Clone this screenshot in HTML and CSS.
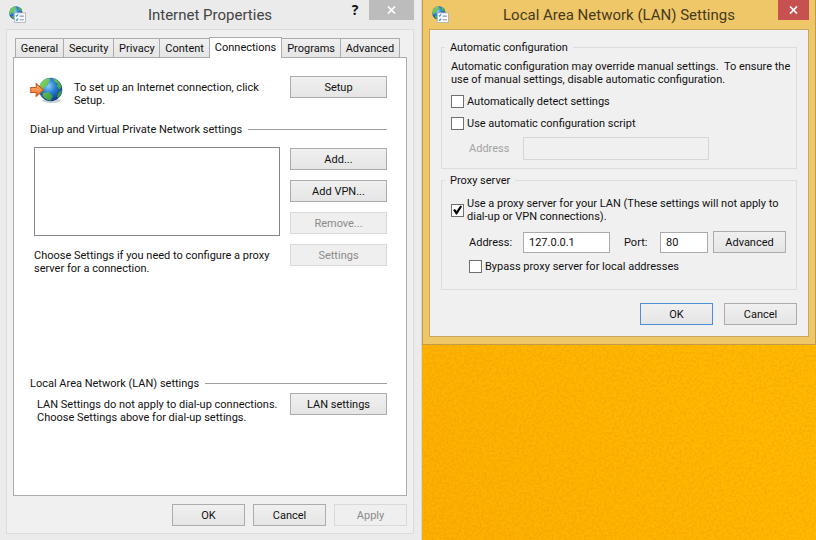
FILE: index.html
```html
<!DOCTYPE html>
<html lang="en">
<head>
<meta charset="utf-8">
<title>Internet Properties</title>
<link rel="stylesheet" href="styles.css">
</head>
<body>
<svg class="defs" width="0" height="0" aria-hidden="true">
  <defs>
    <radialGradient id="sea" cx="0.4" cy="0.35" r="0.7">
      <stop offset="0" stop-color="#8fd0f5"/>
      <stop offset="0.4" stop-color="#2f86d8"/>
      <stop offset="1" stop-color="#0b2f86"/>
    </radialGradient>
    <linearGradient id="land" x1="0" y1="0" x2="1" y2="1">
      <stop offset="0" stop-color="#8fdc62"/>
      <stop offset="1" stop-color="#1d8a35"/>
    </linearGradient>
    <linearGradient id="arrow" x1="0" y1="0" x2="0" y2="1">
      <stop offset="0" stop-color="#ffb877"/>
      <stop offset="1" stop-color="#f0702a"/>
    </linearGradient>
    <symbol id="app-icon" viewBox="0 0 16 16">
      <circle cx="6.5" cy="6.5" r="6.3" fill="url(#sea)"/>
      <path d="M1 4Q3 .6 5.5.5L7 2 5 4 4.5 6 2.5 6.5 1 8.5Q-.3 6 1 4ZM9 .8Q12 2 12.6 5L10.5 5 9 3.2ZM2.5 9.500L5 9 6 11 5 12.600Q3 11.500 2.500 9.500Z" fill="url(#land)"/>
      <rect x="5" y="6.500" width="10.500" height="9" fill="#f8fafb" stroke="#a9b4bc" stroke-width="0.800"/>
      <path d="M6.500 8.800l.8.800 1.300-1.800M6.500 12.800l.8.800 1.300-1.800" fill="none" stroke="#2a8fd0"/>
      <path d="M10 9.500h4M10 13h4" stroke="#8b979f"/>
    </symbol>
  </defs>
</svg>
<main class="desktop">
  <section class="window props">
    <header class="titlebar">
      <svg class="app-icon" aria-hidden="true"><use href="#app-icon"/></svg>
      <h1>Internet Properties</h1>
      <div class="controls">
        <button class="help" aria-label="Help">?</button>
        <button class="close" aria-label="Close"><svg width="9" height="8" viewBox="0 0 9 8"><path d="M1 .5l7 7M8 .5l-7 7" stroke="#fff" stroke-width="1.700"/></svg></button>
      </div>
    </header>
    <div class="client">
      <nav class="tabs" role="tablist">
        <button role="tab">General</button>
        <button role="tab">Security</button>
        <button role="tab">Privacy</button>
        <button role="tab">Content</button>
        <button role="tab" class="active" aria-selected="true">Connections</button>
        <button role="tab">Programs</button>
        <button role="tab">Advanced</button>
      </nav>
      <div class="panel">
        <div class="row setup">
          <div class="intro">
            <svg class="globe" viewBox="0 0 32 26" aria-hidden="true">
              <ellipse cx="21" cy="23.500" rx="9" ry="2" fill="#c9ced3"/>
              <circle cx="20" cy="12.500" r="11.300" fill="url(#sea)"/>
              <path d="M10 7Q13 2 18 1.500L20 3 17 6 18 8 14 10 12 14 9.500 14Q8.500 10 10 7ZM22 1.600Q28 3 30.500 9L29 13 26 9 27 7 24 5ZM13 16L18 15 22 19 20 23.500Q15 22.500 12 18.500ZM28 15L31 13Q30.500 18 27 21L26 19Z" fill="url(#land)"/>
              <path d="M.7 10.500H6V6.800L13 13 6 19.200V15.500H.7Z" fill="url(#arrow)" stroke="#c9541c"/>
            </svg>
            <p>To set up an Internet connection, click<br>Setup.</p>
          </div>
          <button class="btn">Setup</button>
        </div>
        <h2 class="rule">Dial-up and Virtual Private Network settings</h2>
        <div class="row dialup">
          <div class="connections">
            <div class="listbox" role="listbox" aria-label="Connections" tabindex="0"></div>
            <p>Choose Settings if you need to configure a proxy<br>server for a connection.</p>
          </div>
          <div class="stack">
            <button class="btn">Add...</button>
            <button class="btn">Add VPN...</button>
            <button class="btn" disabled>Remove...</button>
            <button class="btn" disabled>Settings</button>
          </div>
        </div>
        <h2 class="rule">Local Area Network (LAN) settings</h2>
        <div class="row lan">
          <p>LAN Settings do not apply to dial-up connections.<br>Choose Settings above for dial-up settings.</p>
          <button class="btn">LAN settings</button>
        </div>
      </div>
      <footer class="actions">
        <button class="btn">OK</button>
        <button class="btn">Cancel</button>
        <button class="btn" disabled>Apply</button>
      </footer>
    </div>
  </section>
  <div class="wallpaper">
    <svg class="grain" aria-hidden="true">
      <filter id="grain" color-interpolation-filters="sRGB"><feTurbulence type="fractalNoise" baseFrequency="0.4" numOctaves="2"/><feColorMatrix values="0 0 0 0 0.85  0 0 0 0 0.5  0 0 0 0 0  4 0 0 0 -1.6"/></filter>
      <rect width="100%" height="100%" filter="url(#grain)"/>
    </svg>
    <section class="window lan-window">
      <header class="titlebar">
        <svg class="app-icon" aria-hidden="true"><use href="#app-icon"/></svg>
        <h1>Local Area Network (LAN) Settings</h1>
        <div class="controls">
          <button class="close" aria-label="Close"><svg width="9" height="8" viewBox="0 0 9 8"><path d="M1 .5l7 7M8 .5l-7 7" stroke="#fff" stroke-width="1.700"/></svg></button>
        </div>
      </header>
      <form class="client">
        <fieldset class="auto">
          <legend>Automatic configuration</legend>
          <p>Automatic configuration may override manual settings.&nbsp; To ensure the<br>use of manual settings, disable automatic configuration.</p>
          <label class="check"><input type="checkbox">Automatically detect settings</label>
          <label class="check"><input type="checkbox">Use automatic configuration script</label>
          <div class="fields">
            <label for="script" class="dim">Address</label>
            <input id="script" type="text" class="script" disabled>
          </div>
        </fieldset>
        <fieldset class="proxy">
          <legend>Proxy server</legend>
          <label class="check"><input type="checkbox" checked><span>Use a proxy server for your LAN (These settings will not apply to<br>dial-up or VPN connections).</span></label>
          <div class="fields">
            <label for="address">Address:</label>
            <input id="address" type="text" class="address" value="127.0.0.1">
            <label for="port" class="port-label">Port:</label>
            <input id="port" type="text" class="port" value="80">
            <button type="button" class="btn">Advanced</button>
          </div>
          <label class="check nested"><input type="checkbox">Bypass proxy server for local addresses</label>
        </fieldset>
        <footer class="actions">
          <button type="button" class="btn default">OK</button>
          <button type="button" class="btn">Cancel</button>
        </footer>
      </form>
    </section>
  </div>
</main>
</body>
</html>
```
FILE: styles.css
```css
* { box-sizing: border-box; }
body, h1, h2, p, fieldset { margin: 0; padding: 0; }
body, button, input {
  font: 11px/13px Tahoma, Roboto, sans-serif;
  color: #111;
}
p, label, h1, h2, legend, button { white-space: nowrap; }
.defs { position: absolute; }

.desktop {
  display: grid;
  grid-template-columns: minmax(0, 422fr) minmax(0, 394fr);
  min-height: 100vh;
}
.wallpaper { position: relative; background: linear-gradient(60deg, #fdb000, #ffba00 60%); }
.grain { position: absolute; inset: 0; width: 100%; height: 100%; opacity: 0.16; }

.window { display: flex; flex-direction: column; position: relative; }
.props { background: #ebebeb; padding: 0 7px 6px 6px; border-right: 1px solid #d8d8d8; }
.lan-window { background: #f0c768; padding: 0 6px 7px; border: solid #c39b45; border-width: 0 1px 1px; }

.titlebar {
  display: grid;
  grid-template-columns: 1fr auto 1fr;
  height: 29px;
}
.titlebar h1 {
  font: 15px/30px "Segoe UI", Roboto, sans-serif;
  color: #444;
}
.lan-window h1 { color: #463a1e; }
.app-icon { width: 17px; height: 17px; margin: 6px 0 0 3px; }
.controls { display: flex; justify-content: flex-end; align-items: flex-start; }
.controls button { height: 20px; padding: 0; border: 0; }
.controls .help { width: 28px; background: none; font: bold 14px/20px "Open Sans", sans-serif; }
.controls .close { display: grid; place-items: center; width: 45px; background: #bcbcbc; }
.lan-window .controls .close { width: 31px; background: #c75050; }

.client { flex: 1; display: flex; flex-direction: column; background: #f0f0f0; }
.props .client { border: 1px solid #dcdcdc; padding: 7px 6px 7px; }
.lan-window .client { border: 1px solid #c9a65c; padding: 11px 11px 11px 11px; }

.tabs { display: flex; align-items: flex-end; height: 20px; padding: 0 7px 0 3px; }
.tabs button {
  flex: 1 1 auto;
  height: 19px;
  padding: 0 3px;
  margin-left: -1px;
  border: 1px solid #acacac;
  border-bottom: 0;
  background: linear-gradient(#f0f0f0, #e5e5e5);
}
.tabs .active { flex-grow: 0; height: 21px; margin-bottom: -1px; padding: 0 5px 2px; background: #fff; z-index: 1; }
.panel {
  flex: 1;
  border: 1px solid #acacac;
  background: #fff;
  padding: 18px 19px 16px 16px;
}

.btn {
  width: 73px;
  height: 22px;
  padding: 0;
  border: 1px solid #acacac;
  background: linear-gradient(#f0f0f0, #e5e5e5);
}
.btn:disabled { background: #efefef; border-color: #d9d9d9; color: #8a8a8a; }
.btn.default { border-color: #4a90d9; }

.row { display: grid; grid-template-columns: 1fr 97px; align-items: start; }
.row .btn { width: 100%; }
.intro { display: flex; gap: 11px; }
.intro p { padding-top: 5px; }
.globe { width: 33px; height: 28px; }
.rule { display: flex; align-items: center; gap: 6px; font-size: 11px; font-weight: normal; }
.rule::after { content: ""; flex: 1; height: 1px; background: #a0a0a0; }
.setup { margin-bottom: 16px; }
.dialup { margin: 11px 0 102px; }
.connections { padding: 0 10px 0 4px; }
.listbox { height: 89px; border: 1px solid #828790; margin-bottom: 13px; }
.stack { display: grid; gap: 10px; padding-top: 1px; }
.lan { margin-top: 3px; }
.lan p { padding: 5px 0 0 7px; }
.actions { display: flex; justify-content: flex-end; gap: 8px; padding-top: 8px; }
.lan-window .actions { gap: 11px; padding-top: 13px; }

fieldset { min-width: 0; border: 1px solid #dcdcdc; }
legend { padding: 0 5px; margin-left: -6px; }
.auto { padding: 6px 9px 8px; margin-bottom: 5px; }
.proxy { padding: 10px 9px 16px; }
.check { display: flex; align-items: center; gap: 3px; margin-top: 9px; }
.proxy .check { margin-top: 0; }
.proxy .fields { margin-top: 8px; }
.proxy .nested { padding-left: 18px; margin-top: 7px; }
input[type="checkbox"] {
  appearance: none;
  flex: none;
  width: 13px;
  height: 13px;
  margin: 0;
  border: 1px solid #707070;
  background: #fff;
}
input[type="checkbox"]:checked::before {
  content: "";
  display: block;
  height: 100%;
  background: #000;
  clip-path: polygon(10% 50%, 26% 40%, 42% 60%, 76% 10%, 92% 18%, 46% 92%, 36% 92%);
}
.fields { display: flex; align-items: center; padding-left: 18px; margin-top: 7px; }
.fields label { width: 54px; }
.fields .port-label { width: 36px; margin-left: 14px; }
.fields input { height: 21px; padding: 0 5px; border: 1px solid #ababab; background: #fff; }
.fields .script { width: 186px; height: 23px; background: #f0f0f0; border-color: #d6d6d6; }
.fields .address { width: 87px; }
.fields .port { width: 48px; }
.fields .btn { margin-left: 5px; }
.fields .dim { color: #a3a3a3; }
```
